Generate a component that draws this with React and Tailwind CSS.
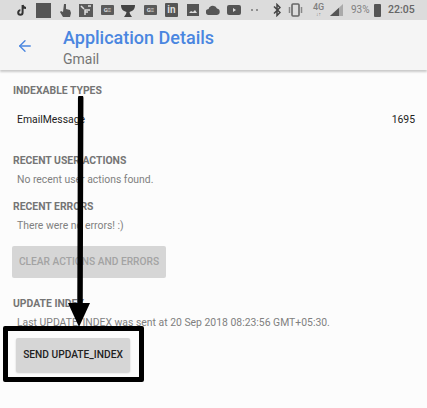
import React from 'react';
import { ArrowLeft } from 'lucide-react';

const Section = ({ title, children }) => (
  <div>
    <h2 className="text-[10.4px] leading-[14px] font-bold text-[#757575]">{title}</h2>
    {children}
  </div>
);

const MiniCard = ({ className }) => (
  <div className={`w-[13px] h-[10px] rounded-[1px] bg-[#5a5a5a] flex items-center justify-center text-[6px] leading-none font-bold text-[#ddd] ${className}`}>
    G≡
  </div>
);

const StatusBar = () => (
  <div className="h-[20px] bg-[#dcdcdc] flex items-center pl-[17px]">
    <svg width="10" height="13" viewBox="0 0 10 13" className="mr-[9px]">
      <path d="M5.6 1v7.5a2.2 2.2 0 1 1-2.2-2.2M5.6 1c.3 1.8 1.4 2.9 3.4 3" fill="none" stroke="#333" strokeWidth="2" />
    </svg>
    <div className="w-[15px] h-[15px] bg-[#555] mr-[9px]" />
    <svg width="11" height="13" viewBox="0 0 11 13" className="mr-[8px]">
      <path d="M4 0h2v5l4 1 1 3-1 4H3L0 8l1-1 2 1z" fill="#555" />
    </svg>
    <svg width="14" height="14" viewBox="0 0 14 14" className="mr-[8px]">
      <path d="M0 1h14v13H0z" fill="#5a5a5a" />
      <path d="M6 12V7h5M6 9h3M2 3l3 3M9 3l3 0" stroke="#ddd" strokeWidth="1.5" fill="none" />
    </svg>
    <MiniCard className="mr-[7px]" />
    <svg width="14" height="13" viewBox="0 0 14 13" className="mr-[9px]">
      <path d="M0 1h14c0 4-2 6-5.5 7L9 10l2 3H3l2-3 .5-2C2 7 0 5 0 1z" fill="#444" />
    </svg>
    <MiniCard className="mr-[8px]" />
    <div className="w-[13px] h-[14px] bg-[#555] rounded-[1px] mr-[9px] flex items-center justify-center text-[10px] leading-none font-bold text-[#ddd]">
      in
    </div>
    <svg width="12" height="12" viewBox="0 0 12 12" className="mr-[7px]">
      <path d="M0 0h12v12H0z" fill="#555" />
      <path d="M2 9l2-2 2 1 2-2 2 3z" fill="#ddd" />
    </svg>
    <svg width="14" height="10" viewBox="0 0 14 10" className="mr-[7px]">
      <path d="M3 10a3 3 0 0 1-.4-6A4.5 4.5 0 0 1 11 3.5 3.3 3.3 0 0 1 11 10z" fill="#555" />
    </svg>
    <svg width="14" height="10" viewBox="0 0 14 10" className="mr-[10px]">
      <rect width="14" height="10" rx="2" fill="#555" />
      <path d="M6 3l3 2-3 2z" fill="#ddd" />
    </svg>
    <div className="w-[7px] flex justify-between mr-[15px]">
      <span className="w-[2px] h-[2px] rounded-full bg-[#777]" />
      <span className="w-[2px] h-[2px] rounded-full bg-[#777]" />
    </div>
    <svg width="8" height="14" viewBox="0 0 8 14" className="mr-[7px]">
      <path d="M1 3.5L7 9.5 4 12.5V1.5L7 4.5 1 10.5" fill="none" stroke="#444" strokeWidth="1.5" />
    </svg>
    <svg width="15" height="14" viewBox="0 0 15 14" className="mr-[10px]">
      <rect x="4" y="1" width="7" height="12" rx="1" fill="none" stroke="#666" strokeWidth="1.6" />
      <path d="M1.5 4v6M13.5 4v6" stroke="#888" strokeWidth="1.5" />
    </svg>
    <div className="w-[11px] mr-[6px] flex flex-col items-center text-[#808080]">
      <span className="text-[9px] leading-[9px] font-medium">4G</span>
      <span className="text-[5px] leading-[5px]">↓↑</span>
    </div>
    <svg width="13" height="12" viewBox="0 0 13 12" className="mr-[8px]">
      <path d="M0 12L13 0v12z" fill="#aaa" />
      <path d="M0 12L9 3.7V12z" fill="#555" />
    </svg>
    <span className="w-[19px] text-[10px] leading-none text-[#808080] mr-[4px]">93%</span>
    <div className="w-[7px] h-[13px] bg-[#555] rounded-[1px] mr-[7px]" />
    <span className="text-[10.5px] leading-none font-medium text-[#666]">22:05</span>
  </div>
);

export default function App() {
  return (
    <div className="relative w-[427px] h-[408px] overflow-hidden bg-[#fcfcfc] font-['Roboto',sans-serif]">
      <StatusBar />

      {/* App bar */}
      <div className="h-[50px] bg-[#f5f5f5] flex items-center shadow-[0_2px_2px_rgba(0,0,0,0.2)] pl-[16px]">
        <ArrowLeft size={18} strokeWidth={1.8} className="text-[#4a86e0] mr-[29px] mt-[2px]" />
        <div className="mt-[3px]">
          <div className="text-[18px] leading-[24px] font-medium text-[#4a86e0]">Application Details</div>
          <div className="text-[14px] leading-[18px] text-[#757575]">Gmail</div>
        </div>
      </div>

      {/* Content */}
      <div className="px-[13px] pt-[14px]">
        <Section title="INDEXABLE TYPES">
          <div className="flex justify-between pl-[4px] -mr-[1px] mt-[15px] text-[10.4px] leading-[14px] text-[#222]">
            <span>EmailMessage</span>
            <span>1695</span>
          </div>
        </Section>

        <div className="mt-[27px]">
          <Section title="RECENT USER ACTIONS">
            <p className="pl-[4px] mt-[5px] text-[10.4px] leading-[14px] text-[#808080]">No recent user actions found.</p>
          </Section>
        </div>

        <div className="mt-[13px]">
          <Section title="RECENT ERRORS">
            <p className="pl-[4px] mt-[5px] text-[10.4px] leading-[14px] text-[#808080]">There were no errors! :)</p>
          </Section>
        </div>

        <button className="block -ml-px mt-[13px] w-[154px] h-[32px] rounded-[2px] bg-[#d6d6d6] text-[10.2px] font-medium text-[#a3a3a3]">
          CLEAR ACTIONS AND ERRORS
        </button>

        <div className="mt-[19px]">
          <Section title="UPDATE INDEX">
            <p className="pl-[4px] mt-[5px] text-[10.4px] leading-[14px] text-[#808080]">Last UPDATE_INDEX was sent at 20 Sep 2018 08:23:56 GMT+05:30.</p>
          </Section>
        </div>

        <button className="block ml-[3px] mt-[8px] w-[114px] h-[34px] rounded-[2px] bg-[#d6d6d6] shadow-[0_1px_2px_rgba(0,0,0,0.2)] text-[10.2px] font-medium text-[#222]">
          SEND UPDATE_INDEX
        </button>
      </div>

      {/* Annotation drawn over the screenshot */}
      <svg width="100" height="240" viewBox="0 0 100 240" className="absolute left-0 top-[96px] pointer-events-none">
        <path d="M80.7 2L80 212" stroke="#000" strokeWidth="5.5" strokeLinecap="round" />
        <path d="M68 207H90L79 231z" fill="#000" />
      </svg>
      <div className="absolute left-[3px] top-[326px] w-[141px] h-[56px] border-[5px] border-black rounded-[2px] pointer-events-none" />
    </div>
  );
}
